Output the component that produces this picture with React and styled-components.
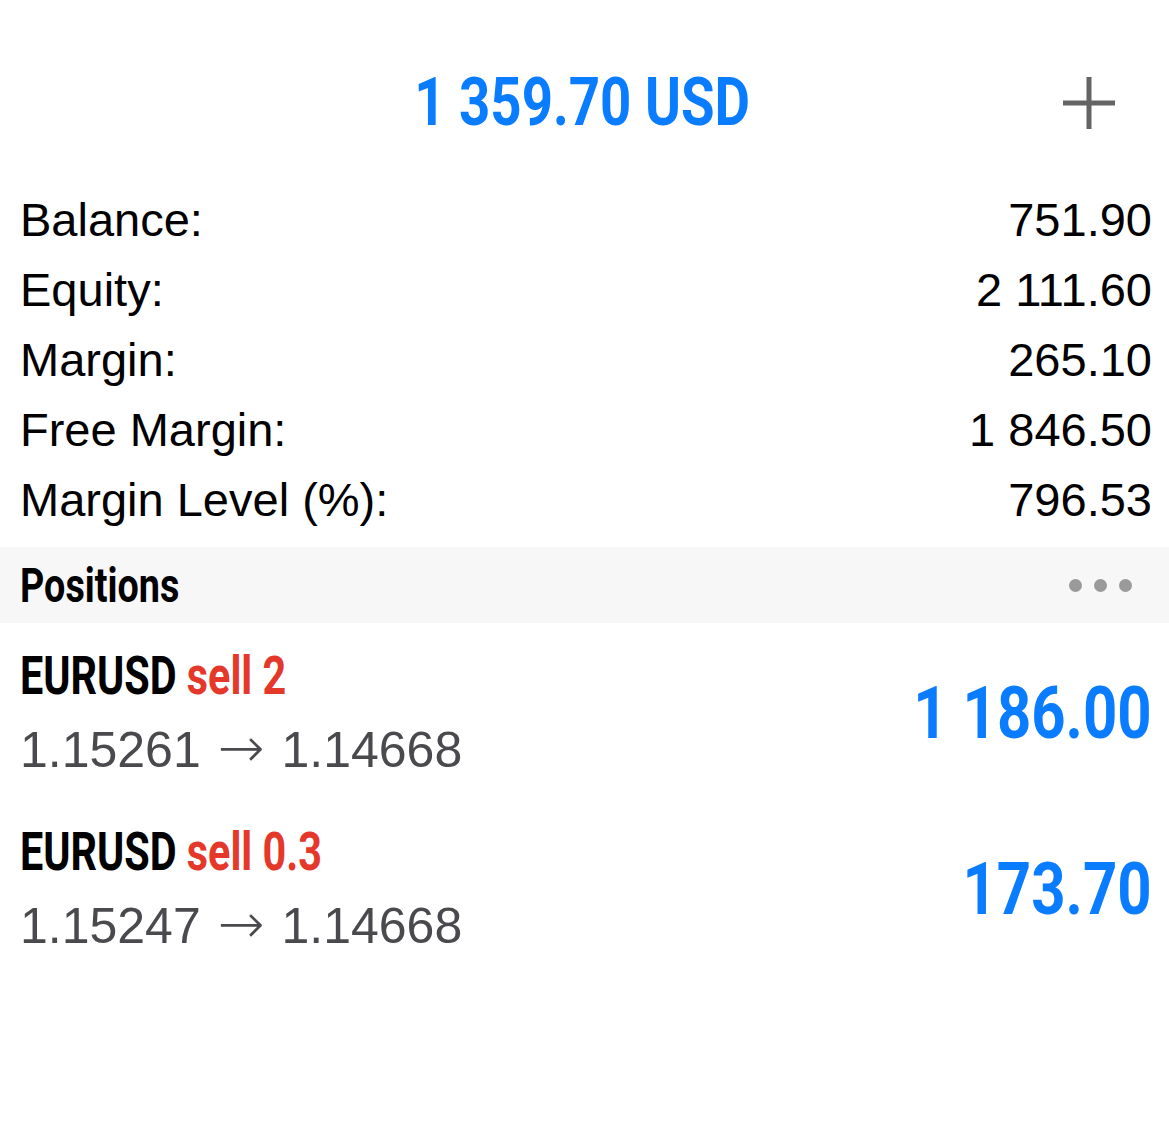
import React from "react";
import styled, { createGlobalStyle } from "styled-components";

const Global = createGlobalStyle`
  html, body { margin: 0; padding: 0; background: #ffffff; }
  body { font-family: "Liberation Sans", Arial, sans-serif; -webkit-font-smoothing: antialiased; }
`;

const COND = `Roboto, "Liberation Sans", sans-serif`;

const Page = styled.div`
  width: 1169px;
  min-height: 1147px;
  background: #ffffff;
`;

/* Narrowed bold face: no condensed family is installed, so the bold
   Roboto is squeezed horizontally to match the condensed original. */
const Narrow = styled.span`
  display: inline-block;
  white-space: nowrap;
  transform: scaleX(${(p) => p.$k || 0.77});
  transform-origin: ${(p) => p.$origin || "left center"};
`;

const Header = styled.header`
  display: grid;
  grid-template-columns: 1fr auto 1fr;
  align-items: center;
  padding: 65px 0 0;
  height: 76px;
`;

const Total = styled.div`
  grid-column: 2;
  font-family: ${COND};
  font-weight: 700;
  font-size: 66px;
  line-height: 76px;
  color: #0a7cff;
  white-space: nowrap;
  margin-right: 5px;
`;

const AddButton = styled.button`
  grid-column: 3;
  justify-self: end;
  margin-right: 52px;
  width: 56px;
  height: 56px;
  padding: 0;
  border: 0;
  background: transparent;
  display: flex;
  align-items: center;
  justify-content: center;
`;

const Summary = styled.section`
  padding: 43px 17px 0 20px;
`;

const SummaryRow = styled.div`
  display: flex;
  justify-content: space-between;
  align-items: center;
  height: 70px;
  font-size: 47px;
  color: #000000;
`;

const Band = styled.div`
  margin-top: 13px;
  height: 76px;
  background: #f7f7f7;
  display: flex;
  align-items: center;
  justify-content: space-between;
  padding: 0 37px 0 20px;
`;

const BandTitle = styled.div`
  font-family: ${COND};
  font-weight: 700;
  font-size: 49px;
  color: #000000;
`;

const Dots = styled.div`
  display: flex;
  gap: 12px;
`;

const Dot = styled.span`
  width: 13px;
  height: 13px;
  border-radius: 50%;
  background: #9a9a9a;
`;

const PositionRow = styled.div`
  display: flex;
  align-items: center;
  justify-content: space-between;
  padding: 17px 17px 13px 20px;
`;

const PositionInfo = styled.div`
  display: flex;
  flex-direction: column;
`;

const PositionTitle = styled.div`
  font-family: ${COND};
  font-weight: 700;
  font-size: 53px;
  line-height: 72px;
  color: #000000;
`;

const Side = styled.span`
  color: #e4382b;
`;

const Prices = styled.div`
  font-size: 50px;
  line-height: 72px;
  color: #4a4a4e;
  white-space: nowrap;
`;

const Arrow = styled.span`
  font-family: "DejaVu Sans", sans-serif;
  font-weight: 200;
  font-size: 56px;
  margin: 0 3px;
  color: #4a4a4e;
`;

const Profit = styled.div`
  font-family: ${COND};
  font-weight: 700;
  font-size: 73px;
  color: ${(p) => (p.$negative ? "#e4382b" : "#0a7cff")};
`;

const summary = [
  ["Balance:", "751.90"],
  ["Equity:", "2 111.60"],
  ["Margin:", "265.10"],
  ["Free Margin:", "1 846.50"],
  ["Margin Level (%):", "796.53"],
];

const positions = [
  { symbol: "EURUSD", side: "sell 2", open: "1.15261", current: "1.14668", profit: "1 186.00" },
  { symbol: "EURUSD", side: "sell 0.3", open: "1.15247", current: "1.14668", profit: "173.70" },
];

export default function App() {
  return (
    <Page>
      <Global />
      <Header>
        <Total>
          <Narrow $k={0.827} $origin="center center">1 359.70 USD</Narrow>
        </Total>
        <AddButton aria-label="add">
          <svg width="56" height="56" viewBox="0 0 56 56">
            <path d="M28 2 V54 M2 28 H54" stroke="#646464" strokeWidth="5" fill="none" />
          </svg>
        </AddButton>
      </Header>
      <Summary>
        {summary.map(([k, v]) => (
          <SummaryRow key={k}>
            <span>{k}</span>
            <span>{v}</span>
          </SummaryRow>
        ))}
      </Summary>
      <Band>
        <BandTitle>
          <Narrow $k={0.77}>Positions</Narrow>
        </BandTitle>
        <Dots>
          <Dot />
          <Dot />
          <Dot />
        </Dots>
      </Band>
      {positions.map((p, i) => (
        <PositionRow key={i}>
          <PositionInfo>
            <PositionTitle>
              <Narrow $k={0.78}>
                {p.symbol} <Side>{p.side}</Side>
              </Narrow>
            </PositionTitle>
            <Prices>
              {p.open} <Arrow>→</Arrow> {p.current}
            </Prices>
          </PositionInfo>
          <Profit>
            <Narrow $k={0.82} $origin="right center">{p.profit}</Narrow>
          </Profit>
        </PositionRow>
      ))}
    </Page>
  );
}
